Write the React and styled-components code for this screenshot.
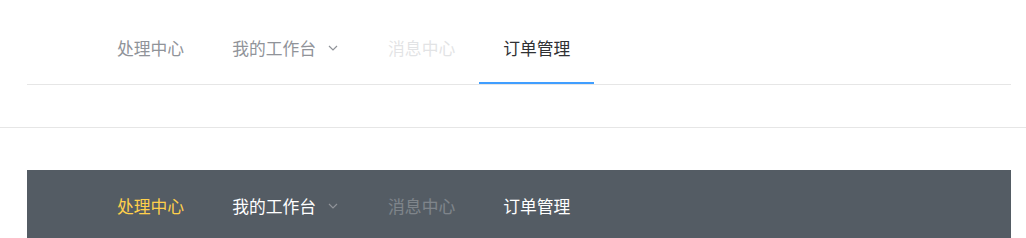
import React from "react";
import styled, { createGlobalStyle, css } from "styled-components";

const GlobalStyle = createGlobalStyle`
  body {
    margin: 0;
    background: #fff;
    font-family: "Noto Sans CJK SC", "Liberation Sans", sans-serif;
  }
`;

const themes = {
  light: {
    bg: "#fff",
    text: "#909399",
    active: "#303133",
    border: "#e6e6e6",
    bar: "#409eff",
    arrow: "#909399",
  },
  dark: {
    bg: "#545c64",
    text: "#fff",
    active: "#ffd04b",
    border: "#545c64",
    bar: "#ffd04b",
    arrow: "#909399",
  },
};

const items = [
  { label: "处理中心", key: "1" },
  { label: "我的工作台", key: "2", sub: true },
  { label: "消息中心", key: "3", disabled: true },
  { label: "订单管理", key: "4" },
];

function Chevron({ color }) {
  return (
    <ArrowIcon viewBox="0 0 14 14" width="14" height="14">
      <path d="M3 5 L7 9 L11 5" fill="none" stroke={color} strokeWidth="1.2" />
    </ArrowIcon>
  );
}

function NavMenu({ variant, active }) {
  const t = themes[variant];
  return (
    <Menu $t={t}>
      {items.map((it) => (
        <Item
          key={it.key}
          $t={t}
          $active={it.key === active}
          $disabled={it.disabled}
          $underline={variant === "light"}
        >
          {it.label}
          {it.sub && <Chevron color={t.arrow} />}
        </Item>
      ))}
    </Menu>
  );
}

export default function App() {
  return (
    <Page>
      <GlobalStyle />
      <NavMenu variant="light" active="4" />
      <Line />
      <NavMenu variant="dark" active="1" />
    </Page>
  );
}

const Page = styled.div`
  padding-top: 12px;
  display: flex;
  flex-direction: column;
`;

const Menu = styled.div`
  display: flex;
  margin: 0 15px 0 27px;
  padding-left: 66px;
  background: ${({ $t }) => $t.bg};
  border-bottom: 1px solid ${({ $t }) => $t.border};
`;

const Item = styled.div`
  box-sizing: border-box;
  height: 72px;
  padding: 0 24px;
  display: flex;
  align-items: center;
  font-size: 16.8px;
  color: ${({ $t }) => $t.text};
  border-bottom: 2px solid transparent;
  padding-top: 1px;
  ${({ $active, $t, $underline }) =>
    $active &&
    css`
      color: ${$t.active};
      ${$underline && `border-bottom-color: ${$t.bar};`}
    `}
  ${({ $disabled }) =>
    $disabled &&
    css`
      opacity: 0.25;
    `}
`;

const ArrowIcon = styled.svg`
  margin-left: 10px;
  margin-top: 1px;
`;

const Line = styled.div`
  height: 1px;
  background: #e6e6e6;
  margin: 42px 0;
`;
